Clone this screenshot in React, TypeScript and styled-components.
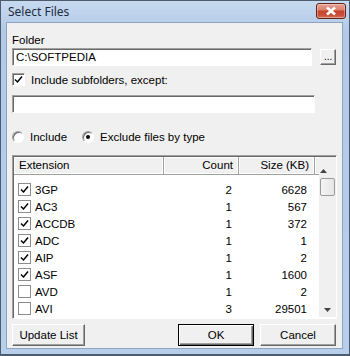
import React from "react";
import styled, { createGlobalStyle } from "styled-components";

const Global = createGlobalStyle`
  html, body { margin: 0; padding: 0; background: #fff; }
  * { box-sizing: border-box; }
`;

const Window = styled.div`
  width: 350px;
  height: 356px;
  background: linear-gradient(#c6d9ef, #b2cae8 30px, #b7cfeb);
  border: 1px solid #4d5b6d;
  border-bottom-width: 2px;
  padding: 0 6px 5px 5px;
  display: flex;
  flex-direction: column;
  font-family: "Liberation Sans", Arial, sans-serif;
  font-size: 11.5px;
  color: #000;
`;

const TitleBar = styled.div`
  height: 21px;
  display: flex;
  align-items: center;
  padding-left: 2px;
  font-family: "Noto Sans", "Open Sans", sans-serif;
  font-size: 12px;
  color: #1e2c3c;
`;

const Title = styled.span`
  flex: 1;
`;

const CloseBox = styled.div`
  flex: 0 0 30px;
  height: 16px;
  margin-top: -2px;
  margin-right: -3px;
  border: 1px solid #5e231b;
  border-radius: 3px;
  background: linear-gradient(#e8a393, #d9826f 40%, #c7442d 52%, #c9503a 80%, #d8735a);
  box-shadow: inset 0 0 0 1px rgba(255, 255, 255, 0.35);
  display: flex;
  align-items: center;
  justify-content: center;
`;

const Client = styled.div`
  flex: 1;
  background: #f0f0f0;
  border: 1px solid #8ea4bf;
  padding: 8px 6px 0 5px;
  display: flex;
  flex-direction: column;
`;

const Label = styled.div`
  height: 14px;
  line-height: 14px;
  margin-top: 2px;
`;

const Row = styled.div<{ $gap?: number; $top: number }>`
  display: flex;
  align-items: center;
  gap: ${(p) => p.$gap ?? 8}px;
  margin-top: ${(p) => p.$top}px;
`;

const TextBox = styled.div`
  width: 303px;
  height: 18px;
  background: #fff;
  border: 1px solid;
  border-color: #a0a0a0 #fff #fff #a0a0a0;
  box-shadow: inset 1px 1px 0 #696969;
  padding: 2px 3px;
  line-height: 13px;
`;

const SmallButton = styled.div`
  width: 16px;
  height: 16px;
  margin-left: 4px;
  background: #f0f0f0;
  border: 1px solid;
  border-color: #fff #696969 #696969 #fff;
  box-shadow: inset -1px -1px 0 #a0a0a0;
  font-size: 10px;
  line-height: 14px;
  text-align: center;
`;

const Check = styled.div<{ $flat?: boolean }>`
  width: 13px;
  height: 13px;
  background: #fff;
  border: 1px solid;
  border-color: ${(p) => (p.$flat ? "#8c8c8c" : "#a0a0a0 #fff #fff #a0a0a0")};
  box-shadow: ${(p) => (p.$flat ? "none" : "inset 1px 1px 0 #696969")};
  display: flex;
  align-items: center;
  justify-content: center;
  flex: none;
`;

const Radio = styled.div<{ $on?: boolean }>`
  width: 12px;
  height: 12px;
  border-radius: 50%;
  background: #fff;
  border: 1px solid;
  border-color: #a0a0a0 #fff #fff #a0a0a0;
  box-shadow: inset 1px 1px 0 #696969;
  display: flex;
  align-items: center;
  justify-content: center;
  &::after {
    content: "";
    width: 4px;
    height: 4px;
    border-radius: 50%;
    background: ${(p) => (p.$on ? "#000" : "transparent")};
  }
`;

const RadioText = styled.span<{ $after?: number }>`
  margin-left: 6px;
  margin-right: ${(p) => p.$after ?? 0}px;
`;

const ListBox = styled.div`
  margin-top: 12px;
  width: 325px;
  height: 164px;
  flex: none;
  background: #fff;
  border: 1px solid;
  border-color: #a0a0a0 #fff #fff #a0a0a0;
  box-shadow: inset 1px 1px 0 #696969;
  padding: 1px 0 1px 1px;
  display: flex;
  overflow: hidden;
`;

const Table = styled.div`
  flex: 1;
  display: flex;
  flex-direction: column;
  overflow: hidden;
`;

const Header = styled.div`
  display: grid;
  grid-template-columns: 150px 75px 76px 1fr;
  height: 18px;
  flex: none;
  background: #f0f0f0;
  margin-bottom: 6px;
`;

const HeadCell = styled.div<{ $right?: boolean }>`
  border-right: 1px solid #a0a0a0;
  border-bottom: 1px solid #a0a0a0;
  box-shadow: inset -1px -1px 0 #fff, inset 1px 1px 0 #fff;
  padding: 0 5px;
  line-height: 17px;
  text-align: ${(p) => (p.$right ? "right" : "left")};
`;

const ItemRow = styled.div`
  display: grid;
  grid-template-columns: 145px 75px 75px;
  height: 17px;
  align-items: center;
  padding-left: 4px;
  flex: none;
`;

const Ext = styled.div`
  display: flex;
  align-items: center;
  gap: 4px;
`;

const Num = styled.div`
  text-align: right;
  padding-right: 6px;
`;

const ScrollBar = styled.div`
  width: 17px;
  background: #f0f0f0;
  display: flex;
  flex-direction: column;
  align-items: center;
  justify-content: space-between;
  padding: 6px 0 5px;
`;

const Thumb = styled.div`
  width: 15px;
  height: 18px;
  margin-top: 3px;
  background: linear-gradient(90deg, #f4f4f4, #e6e6e6);
  border: 1px solid #9b9b9b;
  border-radius: 2px;
`;

const Footer = styled.div`
  margin-top: 5px;
  display: flex;
  align-items: center;
  gap: 6px;
`;

const Button = styled.div<{ $w: number; $def?: boolean; $push?: boolean }>`
  width: ${(p) => p.$w}px;
  height: 22px;
  margin-left: ${(p) => (p.$push ? "auto" : "0")};
  background: #f0f0f0;
  border: 1px solid;
  border-color: ${(p) => (p.$def ? "#000" : "#fff #696969 #696969 #fff")};
  box-shadow: ${(p) =>
    p.$def
      ? "inset 1px 1px 0 #fff, inset -1px -1px 0 #696969, inset -2px -2px 0 #a0a0a0"
      : "inset -1px -1px 0 #a0a0a0"};
  text-align: center;
  line-height: 20px;
`;

const Tick = () => (
  <svg width="9" height="9" viewBox="0 0 9 9">
    <path d="M1 4.5 L3.5 7 L8 1.5" fill="none" stroke="#000" strokeWidth="1.5" />
  </svg>
);

const rows: [string, number, number, boolean][] = [
  ["3GP", 2, 6628, true],
  ["AC3", 1, 567, true],
  ["ACCDB", 1, 372, true],
  ["ADC", 1, 1, true],
  ["AIP", 1, 2, true],
  ["ASF", 1, 1600, true],
  ["AVD", 1, 2, false],
  ["AVI", 3, 29501, false],
];

export default function App() {
  return (
    <>
      <Global />
      <Window>
        <TitleBar>
          <Title>Select Files</Title>
          <CloseBox>
            <svg width="12" height="10" viewBox="0 0 12 10">
              <path d="M2 1.5 L10 8.5 M10 1.5 L2 8.5" stroke="#fff" strokeWidth="2.6" />
            </svg>
          </CloseBox>
        </TitleBar>
        <Client>
          <Label>Folder</Label>
          <Row $gap={4} $top={1}>
            <TextBox>C:\SOFTPEDIA</TextBox>
            <SmallButton>...</SmallButton>
          </Row>
          <Row $gap={6} $top={7}>
            <Check>
              <Tick />
            </Check>
            Include subfolders, except:
          </Row>
          <Row $top={9}>
            <TextBox />
          </Row>
          <Row $gap={0} $top={18}>
            <Radio />
            <RadioText $after={15}>Include</RadioText>
            <Radio $on />
            <RadioText>Exclude files by type</RadioText>
          </Row>
          <ListBox>
            <Table>
              <Header>
                <HeadCell>Extension</HeadCell>
                <HeadCell $right>Count</HeadCell>
                <HeadCell $right>Size (KB)</HeadCell>
                <HeadCell />
              </Header>
              {rows.map(([ext, count, size, on]) => (
                <ItemRow key={ext}>
                  <Ext>
                    <Check $flat>{on && <Tick />}</Check>
                    {ext}
                  </Ext>
                  <Num>{count}</Num>
                  <Num>{size}</Num>
                </ItemRow>
              ))}
              <ItemRow>
                <Ext>
                  <Check $flat />
                </Ext>
              </ItemRow>
            </Table>
            <ScrollBar>
              <div>
                <svg width="7" height="4" viewBox="0 0 7 4">
                  <path d="M0 4 L3.5 0 L7 4Z" fill="#444" />
                </svg>
                <Thumb />
              </div>
              <svg width="7" height="4" viewBox="0 0 7 4">
                <path d="M0 0 L3.5 4 L7 0Z" fill="#444" />
              </svg>
            </ScrollBar>
          </ListBox>
          <Footer>
            <Button $w={73}>Update List</Button>
            <Button $w={76} $def $push>
              OK
            </Button>
            <Button $w={76}>Cancel</Button>
          </Footer>
        </Client>
      </Window>
    </>
  );
}
